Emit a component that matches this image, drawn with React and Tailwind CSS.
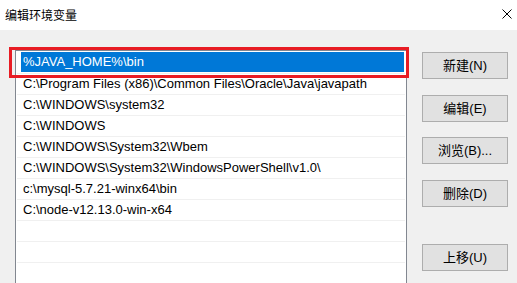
import React from "react";

const PATHS = [
  "C:\\Program Files (x86)\\Common Files\\Oracle\\Java\\javapath",
  "C:\\WINDOWS\\system32",
  "C:\\WINDOWS",
  "C:\\WINDOWS\\System32\\Wbem",
  "C:\\WINDOWS\\System32\\WindowsPowerShell\\v1.0\\",
  "c:\\mysql-5.7.21-winx64\\bin",
  "C:\\node-v12.13.0-win-x64",
  "",
  "",
  "",
];

const BUTTONS = [
  { label: "新建(N)", gap: "mt-0" },
  { label: "编辑(E)", gap: "mt-[16px]" },
  { label: "浏览(B)...", gap: "mt-[15px]" },
  { label: "删除(D)", gap: "mt-[16px]" },
  { label: "上移(U)", gap: "mt-[37px]" },
];

export default function App() {
  return (
    <div className="relative w-[517px] h-[283px] overflow-hidden bg-[#f0f0f0] flex flex-col font-['Liberation_Sans','Noto_Sans_CJK_SC',sans-serif] text-[13px] text-black">
      {/* Title bar */}
      <div className="h-[30px] shrink-0 bg-white flex items-center justify-between pl-[5px] pr-[5px]">
        <span className="text-[12px] leading-none font-['Noto_Sans_CJK_SC',sans-serif]">编辑环境变量</span>
        <svg width="10" height="10" viewBox="0 0 10 10" className="mb-[2px]">
          <path d="M0.5 0.5 L9.5 9.5 M9.5 0.5 L0.5 9.5" stroke="#000" strokeWidth="1" fill="none" />
        </svg>
      </div>

      {/* Body */}
      <div className="flex flex-1 pt-[20px]">
        {/* List */}
        <div className="ml-[15px] w-[392px] h-[260px] shrink-0 border border-[#828790] bg-white px-px">
          <div className="h-[23px] border-b border-[#f0f0f0] flex items-stretch pt-px pb-[1px] pl-[4px] pr-px">
            <div className="flex-1 bg-[#0078d7] text-white flex items-center pl-[2px]">%JAVA_HOME%\bin</div>
          </div>
          {PATHS.map((p, i) => (
            <div key={i} className="h-[21px] border-b border-[#f0f0f0] flex items-center pl-[6px] whitespace-nowrap">
              {p}
            </div>
          ))}
        </div>

        {/* Buttons */}
        <div className="ml-[15px] pt-[2px] flex flex-col">
          {BUTTONS.map((b) => (
            <button
              key={b.label}
              className={`${b.gap} w-[86px] h-[27px] border border-[#adadad] bg-[#e1e1e1] flex items-center justify-center`}
            >
              {b.label}
            </button>
          ))}
        </div>
      </div>

      {/* Red highlight box */}
      <div className="absolute left-[9px] top-[47px] w-[400px] h-[31px] border-[3px] border-[#e81c24] pointer-events-none" />
    </div>
  );
}
